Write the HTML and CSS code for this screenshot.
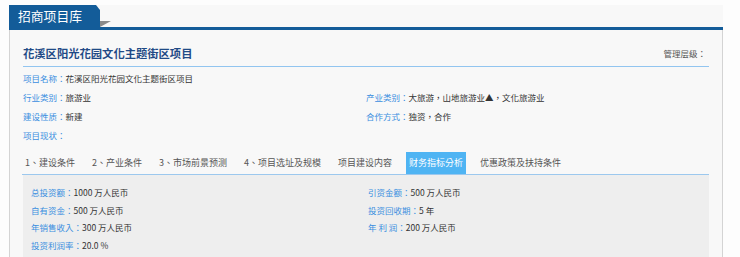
FILE: index.html
```html
<!DOCTYPE html>
<html>
	<head>
		<meta charset="utf-8">
		<link rel="stylesheet" href="styles.css">
	</head>
	<body><div id="Content">
		<div class="caption">
			<div class="captionTab">招商项目库</div>
		</div>
		<div class="panel">
			<div class="projectTitle">
				<div class="name">花溪区阳光花园文化主题街区项目</div>
				<div class="level">管理层级：</div>
			</div>
			<div class="info">
				<div class="item wide"><span class="label">项目名称：</span>花溪区阳光花园文化主题街区项目</div>
				<div class="item"><span class="label">行业类别：</span>旅游业</div>
				<div class="item"><span class="label">产业类别：</span>大旅游，山地旅游业▲，文化旅游业</div>
				<div class="item"><span class="label">建设性质：</span>新建</div>
				<div class="item"><span class="label">合作方式：</span>独资，合作</div>
				<div class="item wide"><span class="label">项目现状：</span></div>
			</div>
			<div class="tabs">
				<span class="tab">1、建设条件</span>
				<span class="tab">2、产业条件</span>
				<span class="tab">3、市场前景预测</span>
				<span class="tab">4、项目选址及规模</span>
				<span class="tab">项目建设内容</span>
				<span class="tab active">财务指标分析</span>
				<span class="tab">优惠政策及扶持条件</span>
			</div>
			<div class="tabBody">
				<div class="item"><span class="label">总投资额：</span>1000 万人民币</div>
				<div class="item"><span class="label">引资金额：</span>500 万人民币</div>
				<div class="item"><span class="label">自有资金：</span>500 万人民币</div>
				<div class="item"><span class="label">投资回收期：</span>5 年</div>
				<div class="item"><span class="label">年销售收入：</span>300 万人民币</div>
				<div class="item"><span class="label">年 利 润：</span>200 万人民币</div>
				<div class="item"><span class="label">投资利润率：</span>20.0 %</div>
			</div>
		</div>
	</div></body>
</html>
```

FILE: styles.css
```css
html, body {
	margin: 0;
	background: #fdfdfd;
}
body {
	font-family: "Noto Sans CJK TC", "Noto Sans CJK SC", sans-serif;
	font-size: 8.5px;
	color: #333;
}
#Content {
	margin-left: 9px;
	width: 714px;
	padding-top: 5px;
}
.caption {
	position: relative;
	height: 22px;
	border-bottom: 3px solid #135c99;
	background: #f8f8f8;
}
.captionTab {
	width: 82px;
	height: 22px;
	padding-left: 9px;
	line-height: 22px;
	font-size: 12.8px;
	color: white;
	background: #135c99;
	clip-path: polygon(0 0, 87px 0, 91px 5px, 91px 100%, 0 100%);
}
.caption:after {
	content: "";
	position: absolute;
	left: 91px;
	top: 16px;
	width: 11px;
	height: 6px;
	background: #8a8a8a;
	clip-path: polygon(0 0, 100% 0, 0 100%);
}
.panel {
	background: #f8f8f8;
	border-left: 1px solid #d4d4d4;
	border-right: 1px solid #d4d4d4;
	padding: 0 13px 0 13px;
	height: 228px;
}
.projectTitle {
	display: flex;
	justify-content: space-between;
	align-items: center;
	padding: 15px 0 5px;
	border-bottom: 1px solid #92c5f0;
	line-height: 16px;
}
.projectTitle .name {
	font-size: 11.3px;
	font-weight: bold;
	color: #1f4a86;
}
.projectTitle .level {
	font-size: 8.5px;
	color: #555;
	padding-right: 3px;
}
.info {
	display: grid;
	grid-template-columns: 343px 1fr;
	margin-top: 2px;
	line-height: 19px;
}
.item .label {
	color: #3a8ee0;
}
.item.wide {
	grid-column: 1 / 3;
}
.tabs {
	margin-top: 7px;
	margin-left: -1px;
	display: flex;
	border-bottom: 1px solid #9cc8ee;
	line-height: 22px;
	font-size: 9px;
}
.tab {
	padding: 0 3px;
	margin-right: 11px;
	color: #555;
}
.tab.active {
	background: #4fb4f3;
	color: white;
}
.tabBody {
	background: #eeeeee;
	display: grid;
	grid-template-columns: 337px 1fr;
	align-content: start;
	padding: 9px 8px 0;
	line-height: 17.7px;
	height: 80px;
}
```
